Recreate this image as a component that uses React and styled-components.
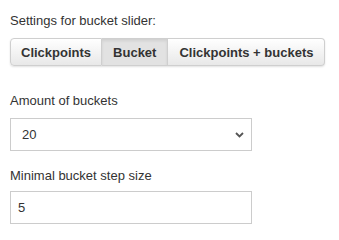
import React from "react";
import styled, { createGlobalStyle } from "styled-components";

const Global = createGlobalStyle`
  html, body { margin: 0; padding: 0; background: #fff; }
  body { font-family: "Liberation Sans", Arial, sans-serif; font-size: 13px; color: #333; }
`;

const Page = styled.div`
  padding: 13px 10px 0 10px;
  display: flex;
  flex-direction: column;
  align-items: flex-start;
`;

const Label = styled.div`
  font-size: 13px;
  line-height: 15px;
  color: #333;
  margin-top: ${(p) => p.$mt || 0}px;
`;

const Group = styled.div`
  display: flex;
  margin-top: 10px;
  border-radius: 4px;
  box-shadow: 0 1px 2px rgba(0, 0, 0, 0.12);
`;

const Btn = styled.button`
  height: 28px;
  box-sizing: border-box;
  padding: 0 ${(p) => p.$px || 10}px;
  font-family: "Liberation Sans", Arial, sans-serif;
  font-weight: bold;
  font-size: 13px;
  color: #333;
  border: 1px solid #cfcfcf;
  border-left-width: ${(p) => (p.$first ? 1 : 0)}px;
  border-radius: ${(p) => (p.$first ? "4px 0 0 4px" : p.$last ? "0 4px 4px 0" : "0")};
  background: ${(p) =>
    p.$active
      ? "#e2e2e2"
      : "linear-gradient(to bottom, #ffffff 0%, #e8e8e8 100%)"};
  box-shadow: ${(p) =>
    p.$active ? "inset 0 2px 3px rgba(0,0,0,0.08)" : "inset 0 1px 0 rgba(255,255,255,0.8)"};
  cursor: pointer;
`;

const SelectBox = styled.div`
  margin-top: 10px;
  width: 242px;
  height: 33px;
  box-sizing: border-box;
  border: 1px solid #ccc;
  display: flex;
  align-items: center;
  justify-content: space-between;
  padding: 0 7px 0 11px;
  font-size: 13px;
  color: #333;
`;

const Input = styled.input`
  margin-top: 8px;
  width: 242px;
  height: 33px;
  box-sizing: border-box;
  border: 1px solid #ccc;
  padding: 0 7px;
  font-family: "Liberation Sans", Arial, sans-serif;
  font-size: 13px;
  color: #333;
  outline: none;
`;

const Chevron = () => (
  <svg width="9" height="6" viewBox="0 0 9 6">
    <path d="M1 1 L4.5 4.5 L8 1" fill="none" stroke="#555" strokeWidth="1.8" />
  </svg>
);

export default function App() {
  return (
    <>
      <Global />
      <Page>
        <Label>Settings for bucket slider:</Label>
        <Group>
          <Btn $first $px={10}>Clickpoints</Btn>
          <Btn $active $px={11}>Bucket</Btn>
          <Btn $last $px={11}>Clickpoints + buckets</Btn>
        </Group>
        <Label $mt={27}>Amount of buckets</Label>
        <SelectBox>
          <span>20</span>
          <Chevron />
        </SelectBox>
        <Label $mt={17}>Minimal bucket step size</Label>
        <Input defaultValue="5" />
      </Page>
    </>
  );
}
